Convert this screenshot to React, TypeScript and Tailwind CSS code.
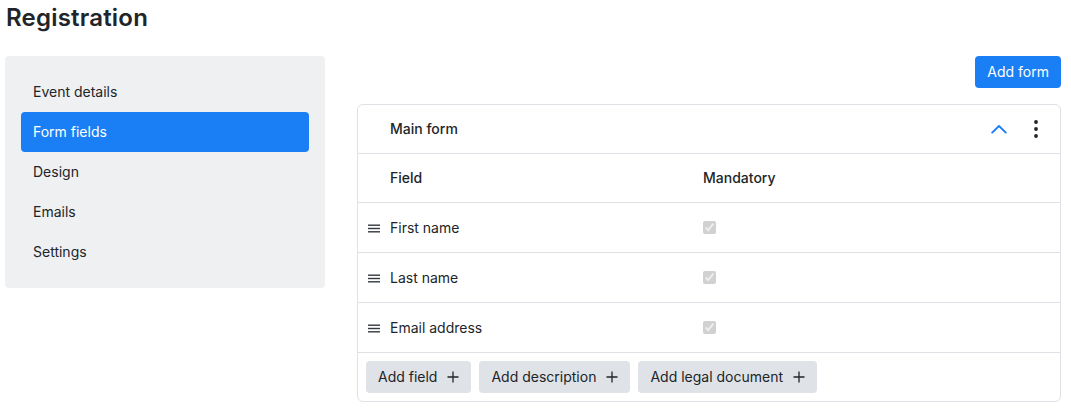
import { useState } from "react";

type Field = {
  label: string;
  mandatory: boolean;
};

const NAV_ITEMS = ["Event details", "Form fields", "Design", "Emails", "Settings"];

const FIELDS: Field[] = [
  { label: "First name", mandatory: true },
  { label: "Last name", mandatory: true },
  { label: "Email address", mandatory: true },
];

function ChevronUpIcon() {
  return (
    <svg width="16" height="10" viewBox="0 0 16 10" fill="none" aria-hidden="true">
      <path d="M1.2 8.6 8 2l6.8 6.6" stroke="#1a7ff5" strokeWidth="1.9" strokeLinecap="round" strokeLinejoin="round" />
    </svg>
  );
}

function DotsIcon() {
  return (
    <svg width="6" height="18" viewBox="0 0 6 18" fill="#212529" aria-hidden="true">
      <circle cx="3" cy="2" r="1.9" />
      <circle cx="3" cy="9" r="1.9" />
      <circle cx="3" cy="16" r="1.9" />
    </svg>
  );
}

function DragIcon() {
  return (
    <svg width="12" height="9" viewBox="0 0 12 9" aria-hidden="true">
      <rect x="0" y="0.5" width="12" height="1.4" fill="#343a40" />
      <rect x="0" y="3.8" width="12" height="1.4" fill="#343a40" />
      <rect x="0" y="7.1" width="12" height="1.4" fill="#343a40" />
    </svg>
  );
}

function PlusIcon() {
  return (
    <svg width="12" height="12" viewBox="0 0 12 12" aria-hidden="true">
      <path d="M6 0.5v11M0.5 6h11" stroke="#212529" strokeWidth="1.3" />
    </svg>
  );
}

function AddButton({ label }: { label: string }) {
  return (
    <button
      type="button"
      className="flex h-8 items-center gap-[10px] rounded bg-[#dfe2e6] px-3 text-sm text-[#212529]"
    >
      <span>{label}</span>
      <PlusIcon />
    </button>
  );
}

export default function App() {
  const [active, setActive] = useState(1);

  return (
    <div className="min-h-[408px] bg-white pl-[5px] pr-[10px] font-['Inter',sans-serif] text-[#212529] antialiased">
      <h1 className="pl-px pt-[2px] text-[24px] leading-[32px] font-semibold tracking-[0.2px]">Registration</h1>

      <div className="mt-[22px] flex gap-8">
        <nav className="flex h-[232px] w-[320px] shrink-0 flex-col rounded bg-[#eff0f2] p-4">
          {NAV_ITEMS.map((item, index) => (
            <button
              key={item}
              type="button"
              onClick={() => setActive(index)}
              className={
                index === active
                  ? "flex h-10 items-center rounded bg-[#1a7ff5] px-3 text-left text-sm text-white"
                  : "flex h-10 items-center rounded px-3 text-left text-sm text-[#212529]"
              }
            >
              {item}
            </button>
          ))}
        </nav>

        <div className="flex min-w-0 flex-1 flex-col">
          <div className="flex justify-end">
            <button type="button" className="h-8 rounded bg-[#1a7ff5] px-3 text-sm text-white">
              Add form
            </button>
          </div>

          <div className="mt-4 overflow-hidden rounded-md border border-[#dee2e6]">
            <div className="flex h-[49px] items-center border-b border-[#dee2e6] pl-8 pr-[21px]">
              <span className="flex-1 text-sm font-medium">Main form</span>
              <button type="button" className="mr-[26px] flex items-center" aria-label="collapse">
                <ChevronUpIcon />
              </button>
              <button type="button" className="flex items-center" aria-label="more">
                <DotsIcon />
              </button>
            </div>

            <div className="flex h-[49px] items-center border-b border-[#dee2e6] text-sm font-medium">
              <div className="w-8 shrink-0" />
              <div className="w-[313px] shrink-0">Field</div>
              <div>Mandatory</div>
            </div>

            {FIELDS.map((field) => (
              <div key={field.label} className="flex h-[50px] items-center border-b border-[#dee2e6] text-sm">
                <div className="flex w-8 shrink-0 justify-center pt-px">
                  <DragIcon />
                </div>
                <div className="w-[313px] shrink-0">{field.label}</div>
                <div className="flex items-center">
                  <input
                    type="checkbox"
                    checked={field.mandatory}
                    disabled
                    readOnly
                    className="m-0 h-[13px] w-[13px]"
                  />
                </div>
              </div>
            ))}

            <div className="flex h-12 items-center gap-2 px-2">
              <AddButton label="Add field" />
              <AddButton label="Add description" />
              <AddButton label="Add legal document" />
            </div>
          </div>
        </div>
      </div>
    </div>
  );
}
